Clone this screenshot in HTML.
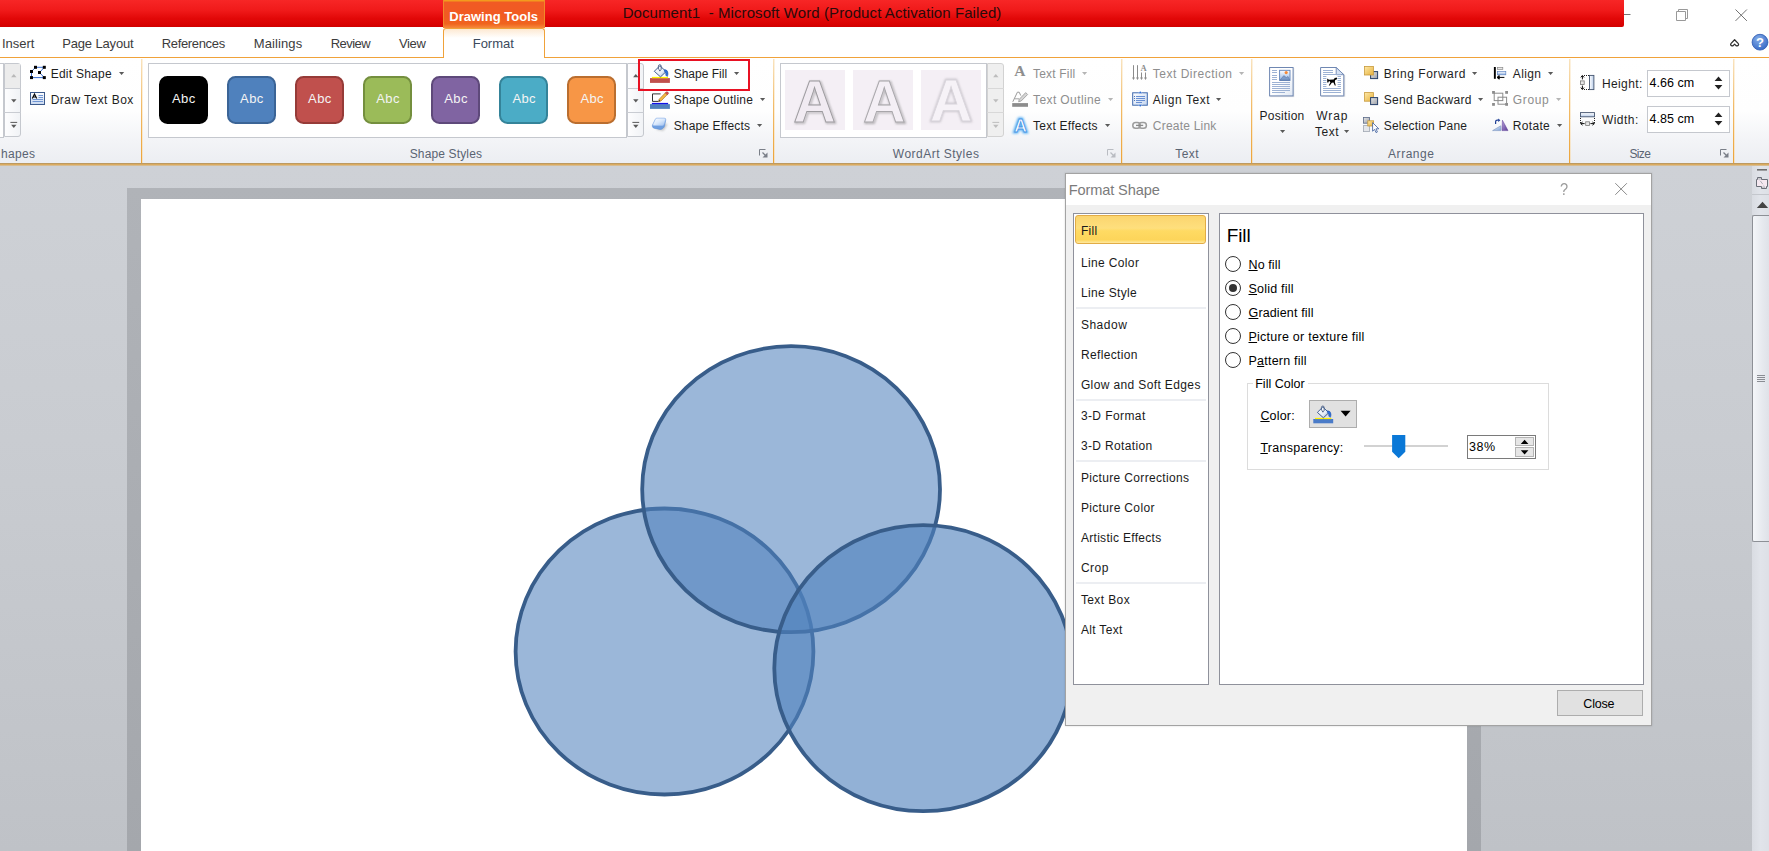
<!DOCTYPE html>
<html><head><meta charset="utf-8"><title>Word</title>
<style>
html,body{margin:0;padding:0;overflow:hidden;}
body{width:1769px;height:851px;overflow:hidden;position:relative;background:#c6c9ce;font-family:"Liberation Sans",sans-serif;}
.a{position:absolute;box-sizing:border-box;}
.t{position:absolute;white-space:pre;font-family:"Liberation Sans",sans-serif;}
svg{position:absolute;overflow:visible;}
u{text-decoration:underline;text-underline-offset:1px;}

</style></head>
<body>
<div class="a" style="left:0px;top:0px;width:1769px;height:58px;background:#fff;"></div>
<div class="a" style="left:0px;top:0px;width:1624px;height:27px;background:linear-gradient(#f72626 0%,#f01a1a 38%,#e20808 68%,#d80101 92%,#cf0000 100%);border-radius:0 0 2px 0;"></div>
<div class="a" style="left:443px;top:0px;width:102px;height:28px;background:linear-gradient(#f39a1e 0px,#f39a1e 1px,#f15a24 2px,#f15a22 60%,#f0641e 85%,#f58a3c 100%);border-left:1px solid #f08a28;border-right:1px solid #f08a28;"></div>
<div class="t" style="left:449.3px;top:10.0px;font-size:13px;line-height:13px;color:#fff;letter-spacing:0.009px;font-weight:bold;">Drawing Tools</div>
<div class="t" style="left:622.7px;top:5.0px;font-size:15px;line-height:15px;color:#2a0a0a;letter-spacing:0.085px;">Document1  - Microsoft Word (Product Activation Failed)</div>
<svg style="left:1620px;top:0" width="149" height="27" viewBox="1620 0 149 27"><path d="M1624 14.5h6.5" stroke="#777" stroke-width="1"/><path d="M1676.5 11.5h9v9h-9z M1678.5 11.5v-2h9v9h-2" fill="none" stroke="#999" stroke-width="1"/><path d="M1735.5 9.5l11.4 11.4 M1746.9 9.5l-11.4 11.4" stroke="#6a6a6a" stroke-width="0.95"/></svg>
<div class="a" style="left:0px;top:57px;width:1769px;height:1px;background:#f0a23a;"></div>
<div class="a" style="left:443px;top:28px;width:102px;height:31px;background:linear-gradient(#fde9d2 0px,#fff 9px,#fff 100%);border:1px solid #f0a23a;border-bottom:none;border-radius:3px 3px 0 0;"></div>
<div class="t" style="left:1.9px;top:37.0px;font-size:13px;line-height:13px;color:#3c3c3c;">Insert</div>
<div class="t" style="left:62.2px;top:37.0px;font-size:13px;line-height:13px;color:#3c3c3c;letter-spacing:-0.151px;">Page Layout</div>
<div class="t" style="left:161.7px;top:37.0px;font-size:13px;line-height:13px;color:#3c3c3c;letter-spacing:-0.331px;">References</div>
<div class="t" style="left:253.7px;top:37.0px;font-size:13px;line-height:13px;color:#3c3c3c;letter-spacing:0.116px;">Mailings</div>
<div class="t" style="left:330.7px;top:37.0px;font-size:13px;line-height:13px;color:#3c3c3c;letter-spacing:-0.525px;">Review</div>
<div class="t" style="left:398.9px;top:37.0px;font-size:13px;line-height:13px;color:#3c3c3c;letter-spacing:-0.315px;">View</div>
<div class="t" style="left:472.7px;top:37.0px;font-size:13px;line-height:13px;color:#3b4a5c;letter-spacing:0.006px;">Format</div>
<svg style="left:1725px;top:30px" width="44" height="26" viewBox="1725 30 44 26"><path d="M1733.2 45.6q-1.6 0.8-2.4-0.4q-0.5-0.9 0.3-1.8l3.5-3.7 3.5 3.7q0.8 0.9 0.3 1.8q-0.8 1.2-2.4 0.4l-1.4-1.5z" fill="none" stroke="#2e2e2e" stroke-width="1.25" stroke-linejoin="round"/><defs><radialGradient id="hg" cx="0.4" cy="0.3" r="0.8"><stop offset="0" stop-color="#86aee8"/><stop offset="1" stop-color="#2f62c2"/></radialGradient></defs><circle cx="1760" cy="42.2" r="7.9" fill="url(#hg)" stroke="#2a58b0" stroke-width="0.8"/><text x="1760" y="47" font-family="Liberation Sans" font-weight="bold" font-size="13" fill="#fff" text-anchor="middle">?</text></svg>
<div class="a" style="left:0px;top:58px;width:1769px;height:105px;background:linear-gradient(#ffffff 0%,#fefefe 50%,#f3f4f7 78%,#eceef2 100%);"></div>
<div class="a" style="left:0px;top:163px;width:1769px;height:3px;background:linear-gradient(#a9926c 0%,#d9a552 40%,#dcb679 70%,#d0c4ae 100%);"></div>
<div class="a" style="left:141px;top:59px;width:1px;height:104px;background:linear-gradient(#f9e4c0 0%,#f2bb68 45%,#eca43a 100%);"></div>
<div class="a" style="left:142px;top:59px;width:1px;height:104px;background:linear-gradient(rgba(252,240,220,0.9),rgba(248,214,160,0.55));"></div>
<div class="a" style="left:773px;top:59px;width:1px;height:104px;background:linear-gradient(#f9e4c0 0%,#f2bb68 45%,#eca43a 100%);"></div>
<div class="a" style="left:774px;top:59px;width:1px;height:104px;background:linear-gradient(rgba(252,240,220,0.9),rgba(248,214,160,0.55));"></div>
<div class="a" style="left:1121px;top:59px;width:1px;height:104px;background:linear-gradient(#f9e4c0 0%,#f2bb68 45%,#eca43a 100%);"></div>
<div class="a" style="left:1122px;top:59px;width:1px;height:104px;background:linear-gradient(rgba(252,240,220,0.9),rgba(248,214,160,0.55));"></div>
<div class="a" style="left:1251px;top:59px;width:1px;height:104px;background:linear-gradient(#f9e4c0 0%,#f2bb68 45%,#eca43a 100%);"></div>
<div class="a" style="left:1252px;top:59px;width:1px;height:104px;background:linear-gradient(rgba(252,240,220,0.9),rgba(248,214,160,0.55));"></div>
<div class="a" style="left:1569px;top:59px;width:1px;height:104px;background:linear-gradient(#f9e4c0 0%,#f2bb68 45%,#eca43a 100%);"></div>
<div class="a" style="left:1570px;top:59px;width:1px;height:104px;background:linear-gradient(rgba(252,240,220,0.9),rgba(248,214,160,0.55));"></div>
<div class="a" style="left:1733px;top:59px;width:1px;height:104px;background:linear-gradient(#f9e4c0 0%,#f2bb68 45%,#eca43a 100%);"></div>
<div class="a" style="left:1734px;top:59px;width:1px;height:104px;background:linear-gradient(rgba(252,240,220,0.9),rgba(248,214,160,0.55));"></div>
<div class="a" style="left:-10px;top:63px;width:14px;height:74.5px;background:#fff;border:1px solid #c5c8ce;"></div>
<div class="a" style="left:4px;top:63px;width:17px;height:74px;background:linear-gradient(90deg,#fdfdfe,#f1f3f6);border:1px solid #c5c8ce;border-radius:0 3px 3px 0;"></div><div class="a" style="left:4px;top:88px;width:17px;height:1px;background:#c9ccd2;"></div><div class="a" style="left:4px;top:112px;width:17px;height:1px;background:#c9ccd2;"></div>
<div class="a" style="left:5px;top:64px;width:15px;height:24px;background:#ececec;"></div>
<svg style="left:4.5px;top:63px" width="17" height="74" viewBox="0 0 17 74"><path d="M6.1000000000000005 14.2h5.4l-2.7-3.2z" fill="#b9b9b9"/><path d="M6.1000000000000005 36.2h5.4l-2.7 3.2z" fill="#5a5a5a"/><path d="M5.4 59.4h6.8" stroke="#5a5a5a" stroke-width="1"/><path d="M6.1000000000000005 61.8h5.4l-2.7 3.2z" fill="#5a5a5a"/></svg>
<div class="t" style="left:50.7px;top:68.0px;font-size:12px;line-height:12px;color:#1e1e1e;letter-spacing:0.243px;">Edit Shape</div>
<svg style="left:119.3px;top:71.6px" width="5.2" height="3" viewBox="0 0 5.2 3"><path d="M0 0h5.2l-2.6 3z" fill="#5a5a5a"/></svg>
<div class="t" style="left:50.7px;top:94.0px;font-size:12px;line-height:12px;color:#1e1e1e;letter-spacing:0.455px;">Draw Text Box</div>
<div class="t" style="left:0.9px;top:148.0px;font-size:12px;line-height:12px;color:#5a6472;letter-spacing:0.326px;">hapes</div>
<svg style="left:29px;top:64px" width="20" height="17" viewBox="29 64 20 17"><path d="M35.5 67.3H44.3L39.5 72.5L44.3 77.6H31.5V71.5Z" fill="none" stroke="#3a6fd0" stroke-width="1"/><rect x="34.0" y="65.8" width="3" height="3" fill="#000"/><rect x="42.8" y="65.8" width="3" height="3" fill="#000"/><rect x="30.0" y="70.0" width="3" height="3" fill="#000"/><rect x="38.0" y="71.0" width="3" height="3" fill="#000"/><rect x="30.0" y="76.1" width="3" height="3" fill="#000"/><rect x="42.8" y="76.1" width="3" height="3" fill="#000"/></svg>
<svg style="left:29px;top:90px" width="18" height="17" viewBox="29 90 18 17"><defs><linearGradient id="tbg" x1="0" y1="0" x2="0" y2="1"><stop offset="0" stop-color="#fff"/><stop offset="1" stop-color="#c8d8f0"/></linearGradient></defs><rect x="30.5" y="92.5" width="14" height="12" fill="url(#tbg)" stroke="#3c5a8c" stroke-width="1"/><path d="M38.5 95.5h4.5M38.5 97.5h4.5M32.5 99.5h10.5M32.5 101.5h10.5" stroke="#6f94d2" stroke-width="1"/><path d="M32.3 98.6l2.2-4.6 2.2 4.6M33.1 97h3" fill="none" stroke="#000" stroke-width="1.1"/></svg>
<div class="a" style="left:148px;top:63px;width:479px;height:74.5px;background:#fff;border:1px solid #c5c8ce;"></div>
<div class="a" style="left:626.5px;top:63px;width:17px;height:74px;background:linear-gradient(90deg,#fdfdfe,#f1f3f6);border:1px solid #c5c8ce;border-radius:0 3px 3px 0;"></div><div class="a" style="left:626.5px;top:88px;width:17px;height:1px;background:#c9ccd2;"></div><div class="a" style="left:626.5px;top:112px;width:17px;height:1px;background:#c9ccd2;"></div>
<svg style="left:626.5px;top:63px" width="17" height="74" viewBox="0 0 17 74"><path d="M6.1000000000000005 14.2h5.4l-2.7-3.2z" fill="#5a5a5a"/><path d="M6.1000000000000005 36.2h5.4l-2.7 3.2z" fill="#5a5a5a"/><path d="M5.4 59.4h6.8" stroke="#5a5a5a" stroke-width="1"/><path d="M6.1000000000000005 61.8h5.4l-2.7 3.2z" fill="#5a5a5a"/></svg>
<div class="a" style="left:158.8px;top:75.6px;width:48.8px;height:48.9px;background:#000000;border:2px solid #000000;border-radius:8.5px;"></div>
<div class="t" style="left:172.0px;top:92.0px;font-size:13px;line-height:13px;color:#f4f4f4;letter-spacing:0.399px;">Abc</div>
<div class="a" style="left:226.87px;top:75.6px;width:48.8px;height:48.9px;background:#4f81bd;border:2px solid #3b6496;border-radius:8.5px;"></div>
<div class="t" style="left:240.1px;top:92.0px;font-size:13px;line-height:13px;color:#f4f4f4;letter-spacing:0.399px;">Abc</div>
<div class="a" style="left:294.94px;top:75.6px;width:48.8px;height:48.9px;background:#c0504d;border:2px solid #963b38;border-radius:8.5px;"></div>
<div class="t" style="left:308.1px;top:92.0px;font-size:13px;line-height:13px;color:#f4f4f4;letter-spacing:0.399px;">Abc</div>
<div class="a" style="left:363.01px;top:75.6px;width:48.8px;height:48.9px;background:#9bbb59;border:2px solid #748f3e;border-radius:8.5px;"></div>
<div class="t" style="left:376.2px;top:92.0px;font-size:13px;line-height:13px;color:#f4f4f4;letter-spacing:0.399px;">Abc</div>
<div class="a" style="left:431.08px;top:75.6px;width:48.8px;height:48.9px;background:#8064a2;border:2px solid #5e497a;border-radius:8.5px;"></div>
<div class="t" style="left:444.3px;top:92.0px;font-size:13px;line-height:13px;color:#f4f4f4;letter-spacing:0.399px;">Abc</div>
<div class="a" style="left:499.15px;top:75.6px;width:48.8px;height:48.9px;background:#4bacc6;border:2px solid #348399;border-radius:8.5px;"></div>
<div class="t" style="left:512.4px;top:92.0px;font-size:13px;line-height:13px;color:#f4f4f4;letter-spacing:0.399px;">Abc</div>
<div class="a" style="left:567.22px;top:75.6px;width:48.8px;height:48.9px;background:#f79646;border:2px solid #ba6e2f;border-radius:8.5px;"></div>
<div class="t" style="left:580.4px;top:92.0px;font-size:13px;line-height:13px;color:#f4f4f4;letter-spacing:0.399px;">Abc</div>
<div class="t" style="left:409.7px;top:148.0px;font-size:12px;line-height:12px;color:#5a6472;letter-spacing:0.144px;">Shape Styles</div>
<svg style="left:759px;top:149px" width="9" height="9" viewBox="0 0 9 9"><path d="M0.5 6.5v-6h6" fill="none" stroke="#7a7f88" stroke-width="1"/><path d="M8.5 3.5v5h-5z" fill="#7a7f88"/><path d="M3.5 3.5l3 3" stroke="#7a7f88" stroke-width="1.2"/></svg>
<div class="t" style="left:673.7px;top:68.0px;font-size:12px;line-height:12px;color:#1e1e1e;">Shape Fill</div>
<svg style="left:733.8px;top:71.6px" width="5.2" height="3" viewBox="0 0 5.2 3"><path d="M0 0h5.2l-2.6 3z" fill="#5a5a5a"/></svg>
<div class="t" style="left:673.7px;top:94.0px;font-size:12px;line-height:12px;color:#1e1e1e;letter-spacing:0.270px;">Shape Outline</div>
<svg style="left:760.2px;top:97.6px" width="5.2" height="3" viewBox="0 0 5.2 3"><path d="M0 0h5.2l-2.6 3z" fill="#5a5a5a"/></svg>
<div class="t" style="left:673.7px;top:120.0px;font-size:12px;line-height:12px;color:#1e1e1e;letter-spacing:0.150px;">Shape Effects</div>
<svg style="left:756.8px;top:123.6px" width="5.2" height="3" viewBox="0 0 5.2 3"><path d="M0 0h5.2l-2.6 3z" fill="#5a5a5a"/></svg>
<div class="a" style="left:638px;top:59px;width:111.5px;height:32px;border:2.4px solid #e81123;"></div>
<svg style="left:648px;top:62px" width="24" height="24" viewBox="648 62 24 24"><rect x="650" y="78.1" width="19.9" height="4.8" fill="#c0504d"/><rect x="651.9" y="76.9" width="16.2" height="1.3" fill="#fff200"/><defs><linearGradient id="bk" x1="0" y1="0" x2="1" y2="1"><stop offset="0" stop-color="#ffffff"/><stop offset="0.6" stop-color="#e8eef8"/><stop offset="1" stop-color="#7f9fd0"/></linearGradient></defs><path d="M654.3 71.3l5.6-5.6 6.2 5.9-5.6 5.3z" fill="url(#bk)" stroke="#2f4f86" stroke-width="0.9" stroke-linejoin="round"/><path d="M658.4 69.5v-3.2q0-1.6 1.4-1.6t1.4 1.6v3.4" fill="none" stroke="#4a5f85" stroke-width="0.9"/><circle cx="659.9" cy="70.3" r="0.9" fill="#4a5f85"/><path d="M664.6 69.6q3.2 0.4 3.4 3.4q0.1 2-0.6 3.4q-0.9-0.2-1.6-1.2q0.6-2.4-1.6-4.2z" fill="#2f6fd6" stroke="#1f4fa8" stroke-width="0.5"/></svg>
<svg style="left:648px;top:90px" width="24" height="22" viewBox="648 90 24 22"><rect x="650" y="104.1" width="19.9" height="4.8" fill="#4f81bd"/><rect x="651.9" y="102.9" width="16.2" height="1.3" fill="#1212e8"/><path d="M660.6 93.9h-8.1v7.5h6" fill="none" stroke="#333" stroke-width="1"/><path d="M658.6 101.6l0.6-2.4 6.2-6.4 1.9 1.8-6.3 6.4z" fill="#f5b942" stroke="#9a6a20" stroke-width="0.6" stroke-linejoin="round"/><path d="M665.4 92.8l0.9-0.9q0.7-0.5 1.4 0.2l0.5 0.5q0.6 0.7 0 1.3l-0.9 0.9z" fill="#d9544f" stroke="#8c2f2a" stroke-width="0.5"/><path d="M658.6 101.6l0.5-1.8 1.3 1.3z" fill="#333"/></svg>
<svg style="left:648px;top:115px" width="24" height="20" viewBox="648 115 24 20"><defs><linearGradient id="se1" x1="0" y1="0" x2="1" y2="1"><stop offset="0" stop-color="#ffffff"/><stop offset="0.5" stop-color="#dbe9fb"/><stop offset="1" stop-color="#9fc0ee"/></linearGradient><filter id="seb" x="-30%" y="-30%" width="160%" height="160%"><feGaussianBlur stdDeviation="0.9"/></filter></defs><path d="M656 129.8l7.5 1 4-6.5-2.5-1z" fill="#9a9a9a" opacity="0.55" filter="url(#seb)"/><path d="M655.4 119.2q0.4-0.9 1.4-0.9h7.4q1.8 0 1.6 1.6l-1.2 5.8q-0.3 1.6-1.4 2.4l-1.2 0.9q-0.8 0.6-2 0.4l-5.4-1q-2.2-0.5-2.3-2.2q0-0.8 0.4-1.6z" fill="#6f9fe0" stroke="#5a8ad2" stroke-width="0.5"/><path d="M655.6 119q0.4-0.8 1.3-0.8h7.3q1.6 0 1.2 1.5l-1.4 4.6q-0.4 1.2-1.7 1.2h-8.2q-1.6 0-1-1.5z" fill="url(#se1)" stroke="#a8c6f2" stroke-width="0.5"/></svg>
<div class="a" style="left:780px;top:63px;width:207px;height:74.5px;background:#fff;border:1px solid #c5c8ce;"></div>
<div class="a" style="left:986.5px;top:63px;width:17px;height:74px;background:#efefef;border:1px solid #d2d2d2;border-radius:0 3px 3px 0;"></div><div class="a" style="left:986.5px;top:88px;width:17px;height:1px;background:#d8d8d8;"></div><div class="a" style="left:986.5px;top:112px;width:17px;height:1px;background:#d8d8d8;"></div>
<svg style="left:986.5px;top:63px" width="17" height="74" viewBox="0 0 17 74"><path d="M6.1000000000000005 14.2h5.4l-2.7-3.2z" fill="#bdbdbd"/><path d="M6.1000000000000005 36.2h5.4l-2.7 3.2z" fill="#bdbdbd"/><path d="M5.4 59.4h6.8" stroke="#bdbdbd" stroke-width="1"/><path d="M6.1000000000000005 61.8h5.4l-2.7 3.2z" fill="#bdbdbd"/></svg>
<div class="a" style="left:785.3px;top:69.7px;width:60px;height:60.2px;background:#f4eff5;"></div>
<div class="a" style="left:853.0px;top:69.7px;width:60px;height:60.2px;background:#f4eff5;"></div>
<div class="a" style="left:921.0px;top:69.7px;width:60px;height:60.2px;background:#f4eff5;"></div>
<svg style="left:780px;top:63px" width="207" height="75" viewBox="780 63 207 75"><defs><filter id="wa1" x="-20%" y="-20%" width="140%" height="140%"><feGaussianBlur stdDeviation="0.8"/></filter><filter id="wa3" x="-20%" y="-20%" width="140%" height="140%"><feGaussianBlur stdDeviation="1.3"/></filter></defs><g font-family="Liberation Sans" font-weight="bold" font-size="59" text-anchor="middle"><text x="815.6" y="123.2" fill="none" stroke="#6f6f6f" stroke-width="1.6" opacity="0.55" filter="url(#wa1)">A</text><text x="814.6" y="122.0" fill="#f1ebf2" stroke="#9c9a9e" stroke-width="0.9">A</text><text x="885.4" y="123.4" fill="none" stroke="#777" stroke-width="1.8" opacity="0.55" filter="url(#wa1)">A</text><text x="884.2" y="121.6" fill="#f4eff5" stroke="#a8a6aa" stroke-width="0.9">A</text><text x="951.1" y="121.4" fill="none" stroke="#bdb9c0" stroke-width="2.4" opacity="0.8" filter="url(#wa3)">A</text><text x="951.1" y="121.0" fill="#f6f2f7" stroke="#d9d5dc" stroke-width="0.8">A</text></g></svg>
<div class="t" style="left:892.8px;top:148.0px;font-size:12px;line-height:12px;color:#5a6472;letter-spacing:0.485px;">WordArt Styles</div>
<svg style="left:1107px;top:149px" width="9" height="9" viewBox="0 0 9 9"><path d="M0.5 6.5v-6h6" fill="none" stroke="#b9bcc2" stroke-width="1"/><path d="M8.5 3.5v5h-5z" fill="#b9bcc2"/><path d="M3.5 3.5l3 3" stroke="#b9bcc2" stroke-width="1.2"/></svg>
<div class="t" style="left:1033.0px;top:68.0px;font-size:12px;line-height:12px;color:#8e8e8e;letter-spacing:0.191px;">Text Fill</div>
<svg style="left:1082.2px;top:71.6px" width="5.2" height="3" viewBox="0 0 5.2 3"><path d="M0 0h5.2l-2.6 3z" fill="#b5b5b5"/></svg>
<div class="t" style="left:1033.0px;top:94.0px;font-size:12px;line-height:12px;color:#8e8e8e;letter-spacing:0.403px;">Text Outline</div>
<svg style="left:1107.6px;top:97.6px" width="5.2" height="3" viewBox="0 0 5.2 3"><path d="M0 0h5.2l-2.6 3z" fill="#b5b5b5"/></svg>
<div class="t" style="left:1033.0px;top:120.0px;font-size:12px;line-height:12px;color:#1e1e1e;letter-spacing:0.245px;">Text Effects</div>
<svg style="left:1104.6px;top:123.6px" width="5.2" height="3" viewBox="0 0 5.2 3"><path d="M0 0h5.2l-2.6 3z" fill="#5a5a5a"/></svg>
<div class="t" style="left:1014.3px;top:62.5px;font-size:15.5px;line-height:16px;color:#8e8e8e;font-weight:bold;font-family:'Liberation Serif',serif;">A</div>
<svg style="left:1010px;top:90px" width="22" height="20" viewBox="1010 90 22 20"><rect x="1012.2" y="103.1" width="15.8" height="3.7" fill="#8c8c8c"/><path d="M1012.8 101.8l4.6-9.6h1.8l1.6 3.4" fill="none" stroke="#9a9a9a" stroke-width="1"/><path d="M1014.6 98.8h4.4" stroke="#9a9a9a" stroke-width="0.9"/><path d="M1018.6 101.8l0.7-2.6 6.4-6.6 1.9 1.9-6.4 6.5z" fill="#d5d5d5" stroke="#8c8c8c" stroke-width="0.7" stroke-linejoin="round"/></svg>
<svg style="left:1008px;top:113px" width="26" height="24" viewBox="1008 113 26 24"><defs><filter id="te" x="-30%" y="-30%" width="160%" height="160%"><feGaussianBlur stdDeviation="1.1"/></filter></defs><g font-family="Liberation Sans" font-weight="bold" font-size="18" text-anchor="middle"><text x="1020.4" y="132.2" fill="#5db4f6" stroke="#5db4f6" stroke-width="3" filter="url(#te)">A</text><text x="1020.4" y="132.2" fill="#fff" stroke="#4a94e4" stroke-width="0.8">A</text></g></svg>
<div class="t" style="left:1152.8px;top:68.0px;font-size:12px;line-height:12px;color:#8e8e8e;letter-spacing:0.501px;">Text Direction</div>
<svg style="left:1239.0px;top:71.6px" width="5.2" height="3" viewBox="0 0 5.2 3"><path d="M0 0h5.2l-2.6 3z" fill="#b5b5b5"/></svg>
<div class="t" style="left:1152.8px;top:94.0px;font-size:12px;line-height:12px;color:#1e1e1e;letter-spacing:0.554px;">Align Text</div>
<svg style="left:1216.2px;top:97.6px" width="5.2" height="3" viewBox="0 0 5.2 3"><path d="M0 0h5.2l-2.6 3z" fill="#5a5a5a"/></svg>
<div class="t" style="left:1152.8px;top:120.0px;font-size:12px;line-height:12px;color:#8e8e8e;letter-spacing:0.213px;">Create Link</div>
<div class="t" style="left:1175.2px;top:148.0px;font-size:12px;line-height:12px;color:#5a6472;letter-spacing:0.464px;">Text</div>
<svg style="left:1130px;top:63px" width="20" height="20" viewBox="1130 63 20 20"><g stroke="#8c8c8c" stroke-width="1" fill="#8c8c8c"><path d="M1133.5 65.2v13M1137.5 65.2v13M1141.5 72.5v6M1145.5 72.5v6" fill="none"/><path d="M1132 77.6h3l-1.5 2.4zM1136 77.6h3l-1.5 2.4zM1140 77.6h3l-1.5 2.4zM1144 77.6h3l-1.5 2.4z" stroke="none"/></g><text x="1143.5" y="71.2" font-family="Liberation Serif" font-size="8.5" font-weight="bold" fill="#8c8c8c" text-anchor="middle">A</text></svg>
<svg style="left:1130px;top:89px" width="20" height="20" viewBox="1130 89 20 20"><defs><linearGradient id="atg" x1="0" y1="0" x2="1" y2="1"><stop offset="0" stop-color="#fff"/><stop offset="1" stop-color="#c5d6ef"/></linearGradient></defs><rect x="1132.7" y="92.8" width="14.6" height="12.4" fill="url(#atg)" stroke="#3d68ad" stroke-width="1"/><path d="M1136 96.5h9M1136 98.5h9M1136 100.5h9M1136 102.5h6" stroke="#5b86cf" stroke-width="0.9"/><path d="M1134 96.5h1M1134 98.5h1M1134 100.5h1" stroke="#3d68ad" stroke-width="0.9"/><path d="M1138.1 93.6h4.4l-2.2-2.6zM1138.1 104.4h4.4l-2.2 2.6z" fill="#2f6fd6" stroke="#fff" stroke-width="0.4"/></svg>
<svg style="left:1130px;top:118px" width="20" height="14" viewBox="1130 118 20 14"><g fill="none" stroke="#9c9c9c" stroke-width="1.5"><rect x="1132.8" y="122.6" width="7.4" height="5.6" rx="2.8"/><rect x="1139" y="122.6" width="7.4" height="5.6" rx="2.8"/></g><path d="M1136 125.4h7.2" stroke="#8a8a8a" stroke-width="1.3"/></svg>
<div class="t" style="left:1259.5px;top:110.0px;font-size:12px;line-height:12px;color:#1e1e1e;letter-spacing:0.301px;">Position</div>
<svg style="left:1280.1px;top:129.9px" width="5.2" height="3" viewBox="0 0 5.2 3"><path d="M0 0h5.2l-2.6 3z" fill="#5a5a5a"/></svg>
<div class="t" style="left:1316.2px;top:110.0px;font-size:12px;line-height:12px;color:#1e1e1e;letter-spacing:0.949px;">Wrap</div>
<div class="t" style="left:1314.9px;top:126.0px;font-size:12px;line-height:12px;color:#1e1e1e;letter-spacing:0.531px;">Text</div>
<svg style="left:1344.0px;top:129.9px" width="5.2" height="3" viewBox="0 0 5.2 3"><path d="M0 0h5.2l-2.6 3z" fill="#5a5a5a"/></svg>
<div class="t" style="left:1383.8px;top:68.0px;font-size:12px;line-height:12px;color:#1e1e1e;letter-spacing:0.528px;">Bring Forward</div>
<svg style="left:1471.8px;top:71.6px" width="5.2" height="3" viewBox="0 0 5.2 3"><path d="M0 0h5.2l-2.6 3z" fill="#5a5a5a"/></svg>
<div class="t" style="left:1383.8px;top:94.0px;font-size:12px;line-height:12px;color:#1e1e1e;letter-spacing:0.304px;">Send Backward</div>
<svg style="left:1477.8px;top:97.6px" width="5.2" height="3" viewBox="0 0 5.2 3"><path d="M0 0h5.2l-2.6 3z" fill="#5a5a5a"/></svg>
<div class="t" style="left:1383.8px;top:120.0px;font-size:12px;line-height:12px;color:#1e1e1e;letter-spacing:0.190px;">Selection Pane</div>
<div class="t" style="left:1512.8px;top:68.0px;font-size:12px;line-height:12px;color:#1e1e1e;letter-spacing:0.379px;">Align</div>
<svg style="left:1547.8px;top:71.6px" width="5.2" height="3" viewBox="0 0 5.2 3"><path d="M0 0h5.2l-2.6 3z" fill="#5a5a5a"/></svg>
<div class="t" style="left:1512.8px;top:94.0px;font-size:12px;line-height:12px;color:#8e8e8e;letter-spacing:0.662px;">Group</div>
<svg style="left:1555.8px;top:97.6px" width="5.2" height="3" viewBox="0 0 5.2 3"><path d="M0 0h5.2l-2.6 3z" fill="#b5b5b5"/></svg>
<div class="t" style="left:1512.8px;top:120.0px;font-size:12px;line-height:12px;color:#1e1e1e;letter-spacing:0.329px;">Rotate</div>
<svg style="left:1556.8px;top:123.6px" width="5.2" height="3" viewBox="0 0 5.2 3"><path d="M0 0h5.2l-2.6 3z" fill="#5a5a5a"/></svg>
<div class="t" style="left:1388.1px;top:148.0px;font-size:12px;line-height:12px;color:#5a6472;letter-spacing:0.518px;">Arrange</div>
<svg style="left:1266px;top:64px" width="32" height="36" viewBox="1266 64 32 36"><defs><linearGradient id="pg" x1="0" y1="0" x2="1" y2="1"><stop offset="0.5" stop-color="#fff"/><stop offset="1" stop-color="#dfe7f3"/></linearGradient><linearGradient id="pic" x1="0" y1="0" x2="0" y2="1"><stop offset="0" stop-color="#ffffff"/><stop offset="1" stop-color="#8fb4e6"/></linearGradient></defs><rect x="1270.2" y="68.1" width="24" height="29" fill="#b8bcc4" opacity="0.5"/><rect x="1269.6" y="67.5" width="23.5" height="28.4" fill="url(#pg)" stroke="#6f87b2" stroke-width="1"/><path d="M1272 70.5h5M1272 72.5h5M1272 75.5h5M1272 77.5h5M1272 79.5h5M1272 82.5h18M1272 84.5h18M1272 86.5h18M1272 88.5h18M1272 90.5h18M1272 92.5h13" stroke="#9db2d4" stroke-width="1"/><rect x="1279.6" y="70.3" width="10.4" height="10.2" fill="url(#pic)" stroke="#5f82b8" stroke-width="0.9"/><circle cx="1286.2" cy="72.6" r="1.6" fill="#f58a3a"/><path d="M1280.2 80l3.6-4.4 2.6 2 1.6-1.2 1.6 3.6z" fill="#7d9dcc" stroke="#56709c" stroke-width="0.5"/></svg>
<svg style="left:1316px;top:64px" width="32" height="36" viewBox="1316 64 32 36"><path d="M1321.2 68.1h16l8 7.4v21.6h-24z" fill="#b8bcc4" opacity="0.5"/><path d="M1320.6 67.5h15.6l7.6 7.2v21.2h-23.2z" fill="#fff" stroke="#6f87b2" stroke-width="1" stroke-linejoin="round"/><path d="M1336.2 67.5v7.2h7.6z" fill="#d6e2f4" stroke="#6f87b2" stroke-width="0.9" stroke-linejoin="round"/><path d="M1323 70.5h10M1323 72.5h10M1323 74.5h18M1323 88.5h18M1323 90.5h18M1323 92.5h18M1323 76.5h3.4M1337.6 76.5h3.4M1323 78.5h3.4M1337.6 78.5h3.4M1323 80.5h3.4M1337.6 80.5h3.4M1323 82.5h3.4M1337.6 82.5h3.4M1323 84.5h3.4M1337.6 84.5h3.4M1323 86.5h3.4M1337.6 86.5h3.4" stroke="#9db2d4" stroke-width="1"/><path d="M1327.2 78.6l1.8 1.2 4.6-0.4 1.4-1.6 1.2 0.2 0.4-0.8 0.6 1 -0.6 1.4-1.4 0.4-0.4 2 1 3.6h-1l-1.4-3-1.6 0.2-2 2.8h-1l1.6-3.4-1.4-1.4-0.6 1.6-1.2 0.2z" fill="#000"/></svg>
<svg style="left:1360px;top:62px" width="24" height="74" viewBox="1360 62 24 74"><defs><linearGradient id="yl" x1="0" y1="0" x2="1" y2="1"><stop offset="0" stop-color="#ffe9a8"/><stop offset="1" stop-color="#e6b13c"/></linearGradient><linearGradient id="gy" x1="0" y1="0" x2="1" y2="1"><stop offset="0" stop-color="#e8e8e8"/><stop offset="1" stop-color="#9a9ea6"/></linearGradient></defs><rect x="1370.6" y="71.6" width="7" height="7" fill="url(#gy)" stroke="#26406a" stroke-width="1"/><rect x="1364.6" y="66.4" width="8.8" height="8.6" fill="url(#yl)" stroke="#c79a3c" stroke-width="0.8"/><rect x="1364.6" y="92.6" width="8.8" height="8.6" fill="url(#yl)" stroke="#c79a3c" stroke-width="0.8"/><rect x="1370.6" y="97.6" width="7" height="7" fill="url(#gy)" stroke="#26406a" stroke-width="1"/><rect x="1363.4" y="117.4" width="6.2" height="5.8" fill="url(#gy)" stroke="#5a6a88" stroke-width="0.8"/><rect x="1363.4" y="125.6" width="6.2" height="6" fill="#e4e6ea" stroke="#a2a8b4" stroke-width="0.8"/><rect x="1367.8" y="120.8" width="5.8" height="5.2" fill="url(#yl)" stroke="#c79a3c" stroke-width="0.8"/><path d="M1372.6 122.6v8.6l2-1.8 1.4 3.2 1.4-0.6-1.4-3.2h2.8z" fill="#fff" stroke="#3a5a9a" stroke-width="0.8" stroke-linejoin="round"/></svg>
<svg style="left:1490px;top:62px" width="22" height="74" viewBox="1490 62 22 74"><defs><linearGradient id="ab" x1="0" y1="0" x2="0" y2="1"><stop offset="0" stop-color="#fff"/><stop offset="1" stop-color="#8fb0e0"/></linearGradient><linearGradient id="r1" x1="0" y1="0" x2="1" y2="1"><stop offset="0" stop-color="#fff"/><stop offset="1" stop-color="#7a9fd8"/></linearGradient><linearGradient id="r2" x1="0" y1="0" x2="1" y2="1"><stop offset="0" stop-color="#b9a3dc"/><stop offset="1" stop-color="#5b3a94"/></linearGradient></defs><rect x="1493.9" y="67" width="1.9" height="11.8" fill="#000"/><rect x="1497.4" y="67.6" width="5.4" height="1.8" fill="#e8e8e8" stroke="#8a8a8a" stroke-width="0.7"/><rect x="1497.4" y="71.4" width="8.4" height="3.4" fill="url(#ab)" stroke="#5f86c4" stroke-width="0.7"/><path d="M1498.4 77.4h6M1497 77.4l2.2-1.8v3.6z" stroke="#000" stroke-width="1" fill="#000"/><g fill="none" stroke="#8c8c8c" stroke-width="1"><rect x="1494.2" y="93.2" width="8.6" height="7.4"/><rect x="1498" y="97.2" width="8.6" height="7"/></g><rect x="1492.1" y="91.0" width="2.8" height="2.8" fill="#8c8c8c"/><rect x="1505.1999999999998" y="91.0" width="2.8" height="2.8" fill="#8c8c8c"/><rect x="1492.1" y="103.0" width="2.8" height="2.8" fill="#8c8c8c"/><rect x="1505.1999999999998" y="103.0" width="2.8" height="2.8" fill="#8c8c8c"/><path d="M1492.6 130.6h8.2v-4.8z" fill="url(#r1)" stroke="#7a94c0" stroke-width="0.6"/><path d="M1502 130.6h6l-5.6-10.4z" fill="url(#r2)" stroke="#5b3a94" stroke-width="0.5"/><path d="M1495.6 124v-2.2q0-1.6 1.6-1.6h1.4" fill="none" stroke="#1f3f94" stroke-width="1.2"/><path d="M1498.2 118.4l2.2 1.8-2.2 1.8z" fill="#1f3f94"/></svg>
<div class="t" style="left:1601.9px;top:78.0px;font-size:12px;line-height:12px;color:#1e1e1e;letter-spacing:0.396px;">Height:</div>
<div class="t" style="left:1601.9px;top:114.0px;font-size:12px;line-height:12px;color:#1e1e1e;letter-spacing:0.478px;">Width:</div>
<div class="a" style="left:1647px;top:70px;width:83px;height:27px;background:#fff;border:1px solid #c5c8ce;"></div>
<div class="t" style="left:1649.5px;top:77.0px;font-size:12.5px;line-height:12px;color:#000;letter-spacing:0.023px;">4.66 cm</div>
<svg style="left:1714px;top:76px" width="9" height="14" viewBox="0 0 9 14"><path d="M0.6 5l3.9-4.4 3.9 4.4zM0.6 9l3.9 4.4 3.9-4.4z" fill="#222"/></svg>
<div class="a" style="left:1647px;top:106px;width:83px;height:27px;background:#fff;border:1px solid #c5c8ce;"></div>
<div class="t" style="left:1649.5px;top:113.0px;font-size:12.5px;line-height:12px;color:#000;letter-spacing:0.023px;">4.85 cm</div>
<svg style="left:1714px;top:112px" width="9" height="14" viewBox="0 0 9 14"><path d="M0.6 5l3.9-4.4 3.9 4.4zM0.6 9l3.9 4.4 3.9-4.4z" fill="#222"/></svg>
<div class="t" style="left:1629.5px;top:148.0px;font-size:12px;line-height:12px;color:#5a6472;letter-spacing:-0.648px;">Size</div>
<svg style="left:1719.5px;top:149px" width="9" height="9" viewBox="0 0 9 9"><path d="M0.5 6.5v-6h6" fill="none" stroke="#7a7f88" stroke-width="1"/><path d="M8.5 3.5v5h-5z" fill="#7a7f88"/><path d="M3.5 3.5l3 3" stroke="#7a7f88" stroke-width="1.2"/></svg>
<svg style="left:1578px;top:72px" width="20" height="56" viewBox="1578 72 20 56"><defs><linearGradient id="hb" x1="0" y1="0" x2="1" y2="0"><stop offset="0" stop-color="#fff"/><stop offset="1" stop-color="#b9cdea"/></linearGradient><linearGradient id="wb" x1="0" y1="0" x2="0" y2="1"><stop offset="0" stop-color="#fff"/><stop offset="1" stop-color="#b9cdea"/></linearGradient></defs><rect x="1589.5" y="75.4" width="4.4" height="14.2" fill="url(#hb)" stroke="#44546e" stroke-width="0.9"/><path d="M1584 75.5h5M1584 89.5h5" stroke="#222" stroke-width="1" stroke-dasharray="1 1"/><path d="M1582.4 76v3.4M1580.8 77.4l1.6-2 1.6 2M1582.4 89v-3.4M1580.8 87.6l1.6 2 1.6-2" fill="none" stroke="#111" stroke-width="1"/><rect x="1580.6" y="80.9" width="3.6" height="3.6" fill="#e8e8e8" stroke="#777" stroke-width="0.8"/><rect x="1580.5" y="112.6" width="14" height="4.2" fill="url(#wb)" stroke="#44546e" stroke-width="0.9"/><path d="M1580.5 118v5M1594.5 118v5" stroke="#222" stroke-width="1" stroke-dasharray="1 1"/><path d="M1581 123.6h3.6M1582.6 122l-2 1.6 2 1.6M1594 123.6h-3.6M1592.4 122l2 1.6-2 1.6" fill="none" stroke="#111" stroke-width="1"/><rect x="1585.7" y="121.8" width="3.8" height="3.6" fill="#e8e8e8" stroke="#777" stroke-width="0.8"/></svg>
<div class="a" style="left:0px;top:166px;width:1769px;height:685px;background:linear-gradient(#ced1d6 0%,#c9ccd1 40%,#bfc2c7 100%);"></div>
<div class="a" style="left:127px;top:188px;width:1354px;height:663px;background:linear-gradient(#b0b3b8,#a4a7ac);"></div>
<div class="a" style="left:141px;top:199px;width:1326px;height:652px;background:#fff;"></div>
<svg style="left:0;top:0" width="1769" height="851" viewBox="0 0 1769 851"><ellipse cx="664.5" cy="651.5" rx="148.9" ry="143.0" fill="#4f81bd" fill-opacity="0.57" stroke="#385d8a" stroke-width="3.8"/><ellipse cx="791.1" cy="489.2" rx="148.9" ry="143.0" fill="#4f81bd" fill-opacity="0.57" stroke="#385d8a" stroke-width="3.8"/><ellipse cx="923.2" cy="668.2" rx="148.9" ry="143.0" fill="#4f81bd" fill-opacity="0.62" stroke="#385d8a" stroke-width="3.8"/></svg>
<div class="a" style="left:1752px;top:166px;width:17px;height:685px;background:linear-gradient(90deg,#d9dce2,#e1e4ea 50%,#dde0e6);"></div>
<div class="a" style="left:1752px;top:194px;width:17px;height:1px;background:#c4c7cd;"></div>
<div class="a" style="left:1752px;top:215px;width:17px;height:327px;background:linear-gradient(90deg,#f4f6f9,#e6e9ee 60%,#dfe2e8);border:1px solid #8d9096;border-right:none;border-radius:2px 0 0 2px;"></div>
<svg style="left:1752px;top:166px" width="17" height="400" viewBox="1752 166 17 400"><path d="M1757 169.8h10" stroke="#6e6e6e" stroke-width="1.6"/><path d="M1756.5 179.5h1v-2h4v2h6v7h-1v2h-5v-2h-5z" fill="#f5e8f0" stroke="#6a6f78" stroke-width="1"/><path d="M1758.4 178.6h2.4l-1.2 1.6z M1762.4 187.6h2.6l-1.3-1.9z" fill="#fff" stroke="#8d929c" stroke-width="0.5"/><path d="M1760.4 181l2.4 3.2" stroke="#9a9ea8" stroke-width="0.8"/><path d="M1756.8 208l5.7-6.2 5.7 6.2z" fill="#444"/><path d="M1757 375.5h8 M1757 377.5h8 M1757 379.5h8 M1757 381.5h8" stroke="#8a8d93" stroke-width="1"/></svg>
<div class="a" style="left:1065px;top:173px;width:587px;height:553px;background:#f0f0f0;border:1px solid #a3a3a3;box-shadow:0 0 2px rgba(0,0,0,0.15);"></div>
<div class="a" style="left:1066px;top:174px;width:585px;height:31px;background:#fff;"></div>
<div class="t" style="left:1068.7px;top:182.5px;font-size:14.6px;line-height:15px;color:#7b7b7b;letter-spacing:-0.120px;">Format Shape</div>
<div class="t" style="left:1560.3px;top:181.0px;font-size:17px;line-height:17px;color:#9c9c9c;transform:scaleX(0.86);transform-origin:left;">?</div>
<svg style="left:1610px;top:178px" width="24" height="22" viewBox="1610 178 24 22"><path d="M1615.3 183.2l11.6 11.6M1626.9 183.2l-11.6 11.6" stroke="#858585" stroke-width="0.95"/></svg>
<div class="a" style="left:1073px;top:213px;width:135.5px;height:472px;background:#fff;border:1px solid #8f919b;"></div>
<div class="a" style="left:1219px;top:213px;width:425px;height:472px;background:#fff;border:1px solid #8f919b;"></div>
<div class="a" style="left:1075.2px;top:215.1px;width:130.4px;height:29.4px;background:linear-gradient(#fbd56f 0%,#fedf7d 45%,#ffda63 55%,#fdd55a 88%,#ffe9a0 100%);border:1px solid #e2ac45;border-radius:3px;"></div>
<div class="t" style="left:1080.9px;top:225.0px;font-size:12px;line-height:12px;color:#1a1a1a;letter-spacing:0.307px;">Fill</div>
<div class="t" style="left:1080.9px;top:257.0px;font-size:12px;line-height:12px;color:#1a1a1a;letter-spacing:0.365px;">Line Color</div>
<div class="t" style="left:1080.9px;top:287.0px;font-size:12px;line-height:12px;color:#1a1a1a;letter-spacing:0.351px;">Line Style</div>
<div class="a" style="left:1075.5px;top:307.0px;width:130px;height:2px;background:#eceef2;"></div>
<div class="t" style="left:1080.9px;top:319.0px;font-size:12px;line-height:12px;color:#1a1a1a;letter-spacing:0.520px;">Shadow</div>
<div class="t" style="left:1080.9px;top:349.0px;font-size:12px;line-height:12px;color:#1a1a1a;letter-spacing:0.356px;">Reflection</div>
<div class="t" style="left:1080.9px;top:379.0px;font-size:12px;line-height:12px;color:#1a1a1a;letter-spacing:0.376px;">Glow and Soft Edges</div>
<div class="a" style="left:1075.5px;top:398.7px;width:130px;height:2px;background:#eceef2;"></div>
<div class="t" style="left:1080.9px;top:410.0px;font-size:12px;line-height:12px;color:#1a1a1a;letter-spacing:0.405px;">3-D Format</div>
<div class="t" style="left:1080.9px;top:440.0px;font-size:12px;line-height:12px;color:#1a1a1a;letter-spacing:0.367px;">3-D Rotation</div>
<div class="a" style="left:1075.5px;top:460.4px;width:130px;height:2px;background:#eceef2;"></div>
<div class="t" style="left:1080.9px;top:472.0px;font-size:12px;line-height:12px;color:#1a1a1a;letter-spacing:0.340px;">Picture Corrections</div>
<div class="t" style="left:1080.9px;top:502.0px;font-size:12px;line-height:12px;color:#1a1a1a;letter-spacing:0.347px;">Picture Color</div>
<div class="t" style="left:1080.9px;top:532.0px;font-size:12px;line-height:12px;color:#1a1a1a;letter-spacing:0.303px;">Artistic Effects</div>
<div class="t" style="left:1080.9px;top:562.0px;font-size:12px;line-height:12px;color:#1a1a1a;letter-spacing:0.520px;">Crop</div>
<div class="a" style="left:1075.5px;top:582.0999999999999px;width:130px;height:2px;background:#eceef2;"></div>
<div class="t" style="left:1080.9px;top:594.0px;font-size:12px;line-height:12px;color:#1a1a1a;letter-spacing:0.394px;">Text Box</div>
<div class="t" style="left:1080.9px;top:624.0px;font-size:12px;line-height:12px;color:#1a1a1a;letter-spacing:0.335px;">Alt Text</div>
<div class="t" style="left:1226.7px;top:226.0px;font-size:19px;line-height:19px;color:#000;letter-spacing:-0.090px;">Fill</div>
<div class="a" style="left:1224.8px;top:256px;width:16px;height:16px;background:#fff;border:1px solid #333;border-radius:50%;"></div>
<div class="t" style="left:1248.5px;top:259.0px;font-size:12.5px;line-height:12px;color:#000;letter-spacing:0.107px;"><u>N</u>o fill</div>
<div class="a" style="left:1224.8px;top:280px;width:16px;height:16px;background:#fff;border:1px solid #333;border-radius:50%;"></div>
<div class="a" style="left:1228.8px;top:284px;width:8px;height:8px;background:#333;border-radius:50%;"></div>
<div class="t" style="left:1248.5px;top:283.0px;font-size:12.5px;line-height:12px;color:#000;letter-spacing:0.225px;"><u>S</u>olid fill</div>
<div class="a" style="left:1224.8px;top:304px;width:16px;height:16px;background:#fff;border:1px solid #333;border-radius:50%;"></div>
<div class="t" style="left:1248.5px;top:307.0px;font-size:12.5px;line-height:12px;color:#000;letter-spacing:0.140px;"><u>G</u>radient fill</div>
<div class="a" style="left:1224.8px;top:328px;width:16px;height:16px;background:#fff;border:1px solid #333;border-radius:50%;"></div>
<div class="t" style="left:1248.5px;top:331.0px;font-size:12.5px;line-height:12px;color:#000;letter-spacing:0.247px;"><u>P</u>icture or texture fill</div>
<div class="a" style="left:1224.8px;top:352px;width:16px;height:16px;background:#fff;border:1px solid #333;border-radius:50%;"></div>
<div class="t" style="left:1248.5px;top:355.0px;font-size:12.5px;line-height:12px;color:#000;letter-spacing:0.229px;">P<u>a</u>ttern fill</div>
<div class="a" style="left:1247px;top:383px;width:302px;height:87px;border:1px solid #dcdcdc;"></div>
<div class="a" style="left:1252.5px;top:378px;width:55px;height:12px;background:#fff;"></div>
<div class="t" style="left:1255.2px;top:378.0px;font-size:12.5px;line-height:12px;color:#000;letter-spacing:0.021px;">Fill Color</div>
<div class="t" style="left:1260.4px;top:410.0px;font-size:12.5px;line-height:12px;color:#000;letter-spacing:0.191px;"><u>C</u>olor:</div>
<div class="a" style="left:1309px;top:400px;width:48px;height:27.5px;background:#e1e1e1;border:1px solid #adadad;"></div>
<svg style="left:1311px;top:403px" width="44" height="22" viewBox="1311 403 44 22"><rect x="1313.3" y="419" width="19.9" height="4.3" fill="#4a7bc8"/><rect x="1315" y="417.9" width="16.4" height="1.2" fill="#fff200"/><defs><linearGradient id="bk2" x1="0" y1="0" x2="1" y2="1"><stop offset="0" stop-color="#ffffff"/><stop offset="0.6" stop-color="#e8eef8"/><stop offset="1" stop-color="#7f9fd0"/></linearGradient></defs><path d="M1317.4 412.4l5.4-5.4 6 5.7-5.4 5.1z" fill="url(#bk2)" stroke="#2f4f86" stroke-width="0.9" stroke-linejoin="round"/><path d="M1321.4 410.6v-3q0-1.6 1.4-1.6t1.4 1.6v3.2" fill="none" stroke="#4a5f85" stroke-width="0.9"/><circle cx="1322.9" cy="411.4" r="0.9" fill="#4a5f85"/><path d="M1327.6 410.7q3.2 0.4 3.4 3.4q0.1 2-0.6 3.2q-0.9-0.2-1.6-1.2q0.6-2.2-1.6-4z" fill="#2f6fd6" stroke="#1f4fa8" stroke-width="0.5"/><path d="M1340.6 410.8h10l-5 5.8z" fill="#000"/></svg>
<div class="t" style="left:1260.4px;top:442.0px;font-size:12.5px;line-height:12px;color:#000;letter-spacing:0.281px;"><u>T</u>ransparency:</div>
<div class="a" style="left:1363.8px;top:444.6px;width:84.4px;height:2px;background:#d2d2d2;"></div>
<svg style="left:1390px;top:433px" width="18" height="28" viewBox="1390 433 18 28"><path d="M1392.1 434.9h13.2v16.8l-6.6 6.6-6.6-6.6z" fill="#0a78d7"/></svg>
<div class="a" style="left:1467px;top:435px;width:69px;height:24px;background:#fff;border:1px solid #7a7a7a;"></div>
<div class="t" style="left:1469.1px;top:441.0px;font-size:12.5px;line-height:12px;color:#000;letter-spacing:0.441px;">38%</div>
<div class="a" style="left:1515.2px;top:436.8px;width:18.8px;height:9.6px;background:#e6e6e6;border:1px solid #b4b4b4;"></div>
<div class="a" style="left:1515.2px;top:447.4px;width:18.8px;height:9.6px;background:#e6e6e6;border:1px solid #b4b4b4;"></div>
<svg style="left:1515px;top:436px" width="19" height="22" viewBox="1515 436 19 22"><path d="M1520.8 444h7.6l-3.8-4.2zM1520.8 450.2h7.6l-3.8 4.2z" fill="#000"/></svg>
<div class="a" style="left:1557.2px;top:690.2px;width:85.6px;height:25.4px;background:#e1e1e1;border:1px solid #adadad;"></div>
<div class="t" style="left:1583.3px;top:698.0px;font-size:12.5px;line-height:12px;color:#000;letter-spacing:-0.190px;">Close</div>
</body></html>
